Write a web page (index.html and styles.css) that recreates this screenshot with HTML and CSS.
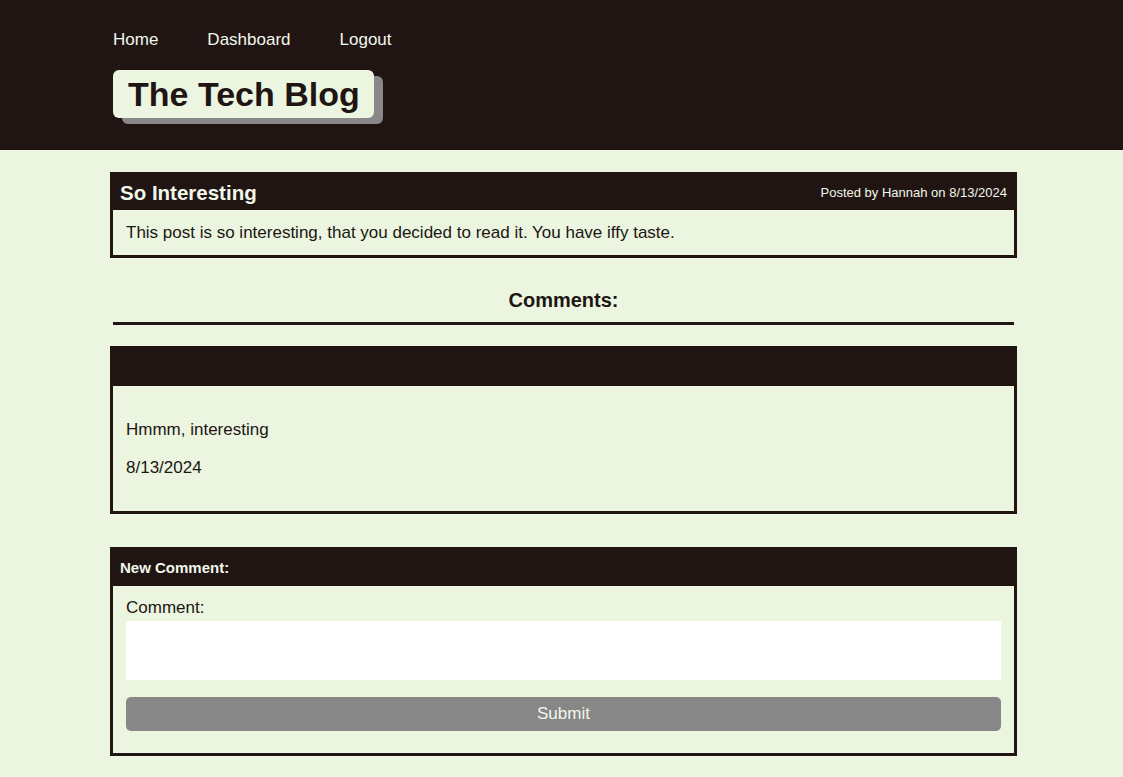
FILE: index.html
```html
<!DOCTYPE html>
<html lang="en">
<head>
<meta charset="utf-8">
<title>The Tech Blog</title>
<link rel="stylesheet" href="styles.css">
</head>
<body>
<header class="site-header">
  <nav class="nav">
    <a href="#" class="nav-link">Home</a>
    <a href="#" class="nav-link">Dashboard</a>
    <a href="#" class="nav-link">Logout</a>
  </nav>
  <h1 class="brand">The Tech Blog</h1>
</header>
<main class="main">
  <section class="card post-card">
    <div class="card-header">
      <h2 class="post-title">So Interesting</h2>
      <span class="post-meta">Posted by Hannah on 8/13/2024</span>
    </div>
    <div class="card-body post-body">This post is so interesting, that you decided to read it. You have iffy taste.</div>
  </section>

  <h3 class="comments-title">Comments:</h3>

  <section class="card comment-card">
    <div class="card-header comment-header"></div>
    <div class="card-body comment-body">
      <p class="comment-text">Hmmm, interesting</p>
      <p class="comment-text">8/13/2024</p>
    </div>
  </section>

  <section class="card new-comment-card">
    <div class="card-header new-comment-header">
      <h4 class="new-comment-title">New Comment:</h4>
    </div>
    <form class="card-body new-comment-body">
      <label class="field-label" for="comment">Comment:</label>
      <textarea id="comment" class="field-input"></textarea>
      <button type="button" class="submit-btn">Submit</button>
    </form>
  </section>
</main>
</body>
</html>
```

FILE: styles.css
```css
* { box-sizing: border-box; }

html, body {
  margin: 0;
  padding: 0;
}

body {
  background: #ebf5e0;
  color: #201512;
  font-family: "Liberation Sans", Arial, sans-serif;
  font-size: 17px;
  line-height: 20px;
}

.site-header {
  background: #201512;
  height: 150px;
  padding: 30px 0 0 113px;
}

.nav {
  display: flex;
  gap: 49px;
}

.nav-link {
  color: #f2f7ec;
  text-decoration: none;
  font-size: 17px;
  line-height: 20px;
}

.brand {
  display: inline-block;
  margin: 20px 0 0 0;
  padding: 5px 14px 5px 15px;
  background: #ebf5e0;
  color: #201512;
  font-size: 34px;
  line-height: 38px;
  font-weight: bold;
  border-radius: 6px;
  box-shadow: 9px 6px 0 #888888;
}

.main {
  width: 907px;
  margin-left: 110px;
  padding-top: 22px;
  padding-bottom: 22px;
}

.card {
  border: 3px solid #201512;
  border-top: none;
}

.card-header {
  background: #201512;
  color: #f2f7ec;
  margin: 0 -3px;
  padding: 0 10px;
  display: flex;
  align-items: center;
}

.post-card .card-header {
  height: 38px;
  justify-content: space-between;
}

.post-title {
  margin: 0;
  padding-top: 3px;
  font-size: 20.5px;
  line-height: 24px;
  font-weight: bold;
}

.post-meta {
  font-size: 13px;
  line-height: 16px;
  padding-top: 3px;
}

.post-body {
  padding: 13px 13px 12px;
}

.comments-title {
  margin: 30px 3px 0;
  padding-bottom: 10px;
  text-align: center;
  font-size: 20px;
  line-height: 24px;
  font-weight: bold;
  border-bottom: 3px solid #201512;
}

.comment-card {
  margin-top: 21px;
}

.comment-header {
  height: 40px;
}

.comment-body {
  padding: 16px 13px 15px;
}

.comment-text {
  margin: 18px 0;
}

.new-comment-card {
  margin-top: 33px;
}

.new-comment-header {
  height: 39px;
}

.new-comment-title {
  margin: 0;
  font-size: 15px;
  line-height: 18px;
  font-weight: bold;
  padding-top: 3px;
}

.new-comment-body {
  display: flex;
  flex-direction: column;
  padding: 12px 13px 22px;
}

.field-label {
  font-size: 17px;
  line-height: 20px;
}

.field-input {
  margin-top: 3px;
  height: 59px;
  border: none;
  background: #ffffff;
  resize: none;
  font-family: inherit;
  font-size: 17px;
}

.submit-btn {
  margin-top: 17px;
  height: 34px;
  border: none;
  border-radius: 5px;
  background: #878787;
  color: #f2f7ec;
  font-family: inherit;
  font-size: 17px;
}
```
